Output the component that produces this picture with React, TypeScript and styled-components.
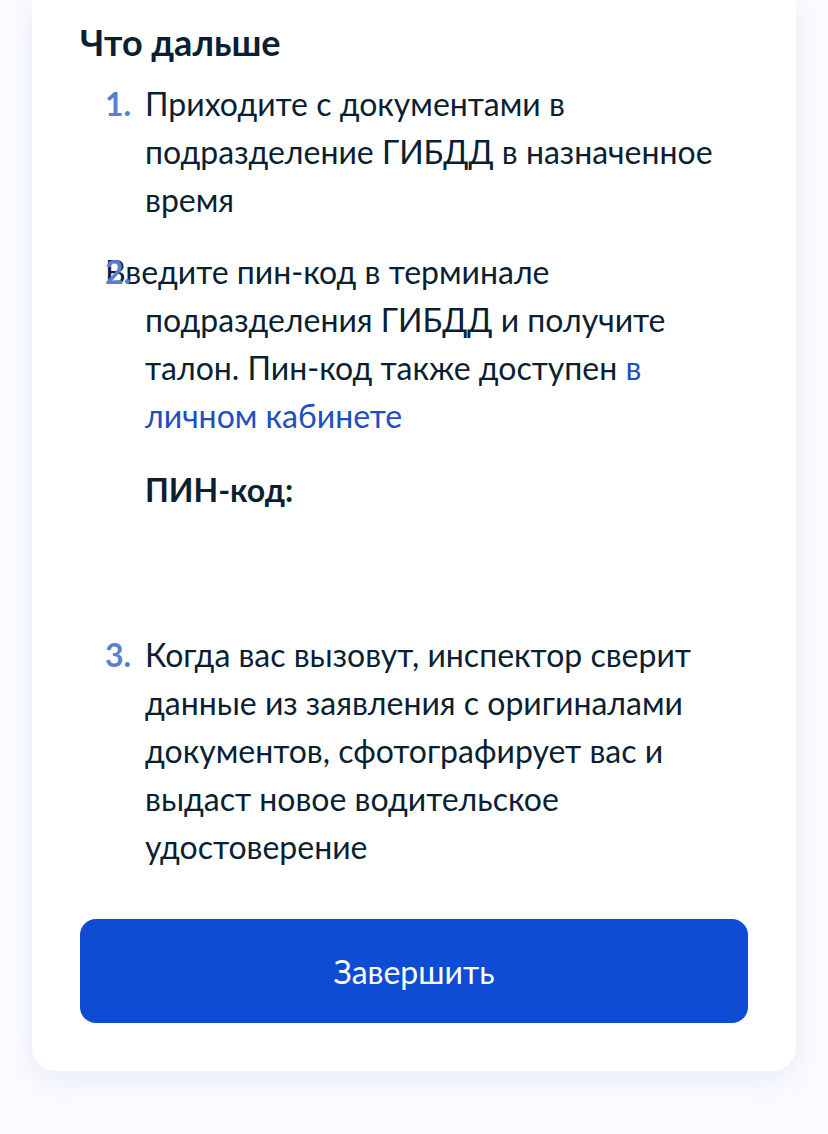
import React from "react";
import styled, { createGlobalStyle } from "styled-components";

const GlobalStyle = createGlobalStyle`
    html, body {
        margin: 0;
        padding: 0;
        background: #fbfcff;
        font-family: Lato, "Noto Sans", sans-serif;
        color: #0b1f33;
    }
`;

const Page = styled.div`
    padding: 0 32px 64px;
`;

const Card = styled.section`
    background: #ffffff;
    border-radius: 0 0 24px 24px;
    box-shadow: 0 8px 32px rgba(86, 102, 196, 0.12);
    padding: 16px 48px 48px;
`;

const Title = styled.h2`
    margin: 0;
    font-size: 36px;
    line-height: 52px;
    font-weight: 700;
`;

const Steps = styled.ol`
    list-style: none;
    margin: 12px 0 0;
    padding: 0;
    display: flex;
    flex-direction: column;
    gap: 24px;
`;

const Step = styled.li`
    display: flex;
    padding-left: 25px;
    font-size: 32px;
    line-height: 48px;
`;

// номер рисуется поверх текста — как в оригинале, где второй пункт съехал
const Num = styled.span`
    position: relative;
    z-index: 1;
    flex: 0 0 40px;
    color: #5a7fd0;
    font-weight: 700;
`;

const Body = styled.div<{ $broken?: boolean }>`
    flex: 1;
    text-indent: ${({ $broken }) => ($broken ? "-40px" : "0")};
    margin-left: ${({ $broken }) => ($broken ? "-40px" : "0")};
    padding-left: ${({ $broken }) => ($broken ? "40px" : "0")};
`;

const Link = styled.a`
    color: #1d4fbf;
    text-decoration: none;
`;

const PinLabel = styled.div`
    margin-top: 26px;
    font-weight: 700;
    text-indent: 0;
`;

const PinValue = styled.div`
    height: 69px;
    margin-top: 24px;
`;

const Finish = styled.button`
    display: block;
    width: 100%;
    margin-top: 48px;
    height: 104px;
    border: 0;
    border-radius: 16px;
    background: #0d4cd3;
    color: #ffffff;
    font-family: Lato, "Noto Sans", sans-serif;
    font-size: 32px;
    cursor: pointer;
`;

export default function App() {
    return (
        <Page>
            <GlobalStyle />
            <Card>
                <Title>Что дальше</Title>
                <Steps>
                    <Step>
                        <Num>1.</Num>
                        <Body>Приходите с документами в подразделение ГИБДД в назначенное время</Body>
                    </Step>
                    <Step>
                        <Num>2.</Num>
                        <Body $broken>
                            Введите пин-код в терминале подразделения ГИБДД и получите талон. Пин-код также доступен{" "}
                            <Link href="#">в личном кабинете</Link>
                            <PinLabel>ПИН-код:</PinLabel>
                            <PinValue />
                        </Body>
                    </Step>
                    <Step>
                        <Num>3.</Num>
                        <Body>
                            Когда вас вызовут, инспектор сверит данные из заявления с оригиналами документов, сфотографирует вас и выдаст новое водительское удостоверение
                        </Body>
                    </Step>
                </Steps>
                <Finish>Завершить</Finish>
            </Card>
        </Page>
    );
}
